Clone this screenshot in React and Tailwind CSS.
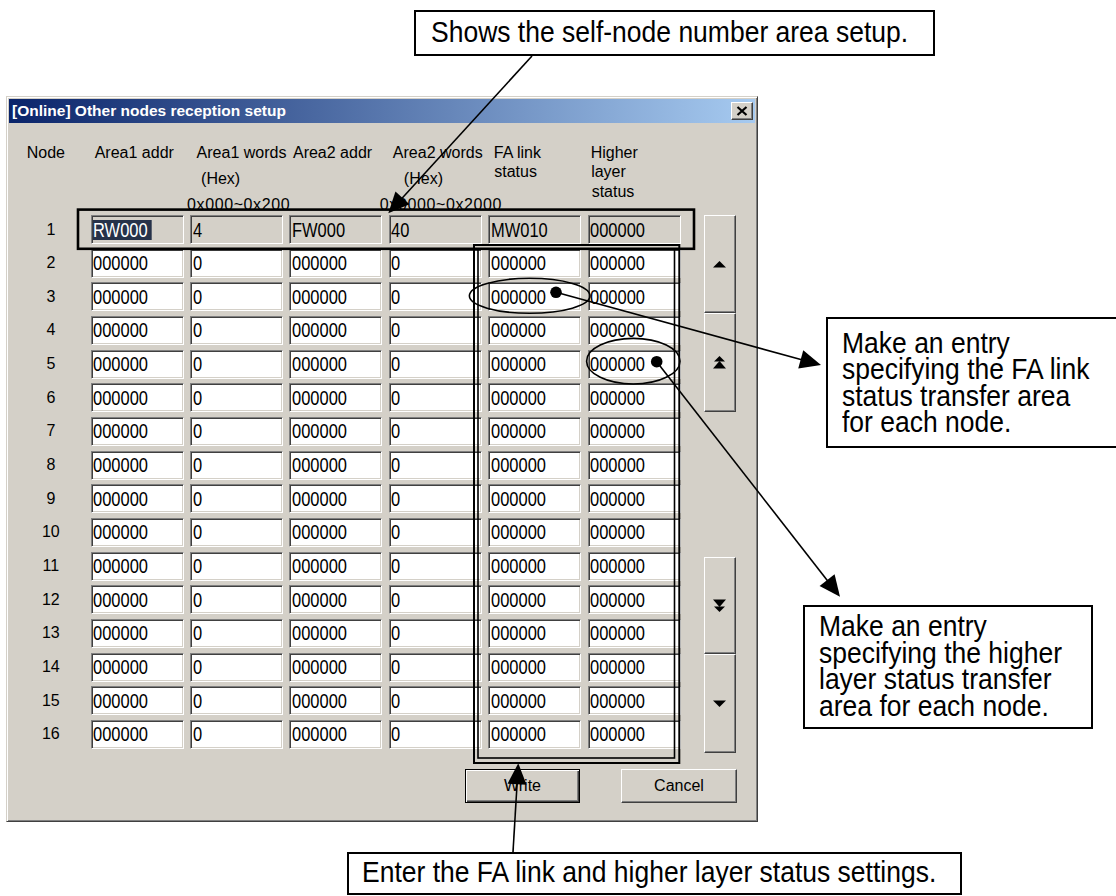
// Other nodes reception setup dialog, with its callout annotations
const firstRow = ["RW000", "4", "FW000", "40", "MW010", "000000"];
const otherRow = ["000000", "0", "000000", "0", "000000", "000000"];
const rows = Array.from({ length: 16 }, (_, i) => i + 1);

const heads = [
	{ lines: ["Area1 addr"], ml: [4] },
	{ lines: ["Area1 words", "(Hex)", "0x000~0x200"], ml: [6.5, 11, -3], tall: true },
	{ lines: ["Area2 addr"], ml: [3.5] },
	{ lines: ["Area2 words", "(Hex)", "0x0000~0x2000"], ml: [4, 15, -9], tall: true },
	{ lines: ["FA link", "status"], ml: [5.5, 6] },
	{ lines: ["Higher", "layer", "status"], ml: [3, 3.5, 4] },
];

function Field({ value, gray, selected }) {
	return (
		<div
			className={`h-[29px] w-[93px] flex items-center overflow-hidden border border-t-[#808080] border-l-[#808080] border-b-white border-r-white shadow-[inset_1px_1px_0_#404040,inset_-1px_-1px_0_#d4d0c8] pl-[1.6px] ${
				gray ? "bg-[#d4d0c8]" : "bg-white"
			}`}
		>
			<span
				className={`inline-block origin-left [transform:scaleX(0.804)] text-[20.5px] leading-[20px] whitespace-nowrap ${
					selected ? "bg-[#26324a] text-white pr-[5px]" : "text-black"
				}`}
			>
				{value}
			</span>
		</div>
	);
}

function ScrollButton({ h, children }) {
	return (
		<div
			className={`${h} w-[32px] flex items-center justify-center bg-[#d4d0c8] border border-t-white border-l-white border-r-[#404040] border-b-[#404040] shadow-[inset_-1px_-1px_0_#808080]`}
		>
			{children}
		</div>
	);
}

function Dialog() {
	return (
		<div className="w-[752px] h-[726px] bg-[#d4d0c8] border border-t-[#d4d0c8] border-l-[#d4d0c8] border-r-[#404040] border-b-[#404040] shadow-[inset_1px_1px_0_#fff,inset_-1px_-1px_0_#808080] p-[2px] flex flex-col">
			{/* Title bar */}
			<div className="h-[24px] flex items-center justify-between pl-[3px] pr-[2px] bg-[linear-gradient(to_right,#0a246a,#a6caf0)]">
				<span className="text-white font-bold text-[15.5px] leading-none whitespace-nowrap">
					[Online] Other nodes reception setup
				</span>
				<div className="w-[22px] h-[18px] flex items-center justify-center bg-[#d4d0c8] border border-t-white border-l-white border-r-[#404040] border-b-[#404040] shadow-[inset_-1px_-1px_0_#808080]">
					<svg width="12" height="10" viewBox="0 0 12 10">
						<path d="M1.5 1 L10.5 9 M10.5 1 L1.5 9" stroke="black" strokeWidth="2.2" />
					</svg>
				</div>
			</div>

			{/* Column headers */}
			<div className="h-[92px] flex text-[16px] text-black">
				<div className="w-[81.7px] text-center pr-[8px] pt-[19.7px] leading-[19.5px]">Node</div>
				<div className="flex gap-[6.4px]">
					{heads.map((h) => (
						<div
							key={h.lines[0]}
							className={`w-[93px] flex flex-col ${h.tall ? "pt-[16.7px] leading-[26px]" : "pt-[19.7px] leading-[19.5px]"}`}
						>
							{h.lines.map((l, i) => (
								<div
									key={l}
									className={`whitespace-nowrap ${l.startsWith("0x") ? "tracking-[0.6px]" : ""}`}
									style={{ marginLeft: h.ml[i] }}
								>
									{l}
								</div>
							))}
						</div>
					))}
				</div>
			</div>

			{/* Rows and scroll buttons */}
			<div className="flex items-start">
				<div className="flex flex-col gap-[4.67px]">
					{rows.map((n) => (
						<div key={n} className="flex items-center">
							<div className="w-[81.7px] text-center pl-[2px] text-[16px] text-black">{n}</div>
							<div className="flex gap-[6.4px]">
								{(n === 1 ? firstRow : otherRow).map((v, i) => (
									<Field key={i} value={v} gray={n === 1} selected={n === 1 && i === 0} />
								))}
							</div>
						</div>
					))}
				</div>
				<div className="ml-[23.3px] flex flex-col">
					<ScrollButton h="h-[98px]">
						<svg width="13" height="7" viewBox="0 0 13 7">
							<polygon points="6.5,0 13,6.5 0,6.5" fill="black" />
						</svg>
					</ScrollButton>
					<ScrollButton h="h-[99px]">
						<svg width="13" height="13" viewBox="0 0 13 13">
							<polygon points="6.5,0 12,5.5 1,5.5" fill="black" />
							<polygon points="6.5,5 13,12.5 0,12.5" fill="black" />
						</svg>
					</ScrollButton>
					<div className="h-[145px]" />
					<ScrollButton h="h-[97px]">
						<svg width="13" height="13" viewBox="0 0 13 13">
							<polygon points="0,0.5 13,0.5 6.5,8" fill="black" />
							<polygon points="1,7.5 12,7.5 6.5,13" fill="black" />
						</svg>
					</ScrollButton>
					<ScrollButton h="h-[99px]">
						<svg width="13" height="7" viewBox="0 0 13 7">
							<polygon points="0,0.5 13,0.5 6.5,7" fill="black" />
						</svg>
					</ScrollButton>
				</div>
			</div>

			{/* Write / Cancel */}
			<div className="flex mt-[16px] text-[16px] text-black">
				<button className="ml-[456px] w-[115px] h-[34px] bg-[#d4d0c8] border border-black shadow-[inset_1px_1px_0_#fff,inset_-1px_-1px_0_#404040,inset_-2px_-2px_0_#808080]">
					Write
				</button>
				<button className="ml-[41px] w-[116px] h-[34px] bg-[#d4d0c8] border border-t-white border-l-white border-r-[#404040] border-b-[#404040] shadow-[inset_-1px_-1px_0_#808080]">
					Cancel
				</button>
			</div>
		</div>
	);
}

function Note({ className, lines }) {
	return (
		<div className={`absolute bg-white border-2 border-black ${className}`}>
			<div className="origin-top-left [transform:scaleX(0.883)] text-[30px] leading-[26.6px] whitespace-nowrap text-black">
				{lines.map((l) => (
					<div key={l}>{l}</div>
				))}
			</div>
		</div>
	);
}

function Arrow({ x1, y1, x2, y2 }) {
	const len = 21;
	const hw = 9.5;
	const dx = x2 - x1;
	const dy = y2 - y1;
	const d = Math.hypot(dx, dy);
	const ux = dx / d;
	const uy = dy / d;
	const bx = x2 - ux * len;
	const by = y2 - uy * len;
	return (
		<g>
			<line x1={x1} y1={y1} x2={bx + ux * 2} y2={by + uy * 2} stroke="black" strokeWidth="1.6" />
			<polygon
				points={`${x2},${y2} ${bx - uy * hw},${by + ux * hw} ${bx + uy * hw},${by - ux * hw}`}
				fill="black"
			/>
		</g>
	);
}

function Marks() {
	return (
		<svg className="absolute inset-0 pointer-events-none" width="1116" height="896" viewBox="0 0 1116 896">
			<g fill="none" stroke="black">
				<rect x="78" y="209.6" width="616" height="39.2" strokeWidth="2.6" />
				<rect x="474" y="245" width="205.3" height="518" strokeWidth="2" />
				<rect x="478" y="249" width="196.5" height="509" strokeWidth="1.6" />
				<ellipse cx="529.7" cy="295.8" rx="60.3" ry="17.5" strokeWidth="1.6" />
				<ellipse cx="633.3" cy="361.2" rx="46.7" ry="22.8" strokeWidth="1.6" />
			</g>
			<circle cx="556" cy="292.3" r="5.8" fill="black" />
			<circle cx="656.7" cy="361.7" r="5.8" fill="black" />
			<Arrow x1={532} y1={56} x2={388.3} y2={213.3} />
			<Arrow x1={556} y1={292.3} x2={821} y2={365} />
			<Arrow x1={656.7} y1={361.7} x2={840} y2={596.7} />
			<Arrow x1={513} y1={852} x2={518.3} y2={763.3} />
		</svg>
	);
}

export default function App() {
	return (
		<div className="relative w-[1116px] h-[896px] overflow-hidden bg-white pt-[96px] pl-[6px] font-['Liberation_Sans',Arial,sans-serif]">
			<Dialog />
			<Note
				className="left-[414px] top-[9.6px] w-[521px] h-[46.2px] pl-[15px] pt-[7.7px]"
				lines={["Shows the self-node number area setup."]}
			/>
			<Note
				className="left-[826px] top-[317.3px] w-[320px] h-[131px] pl-[14px] pt-[10.3px]"
				lines={["Make an entry", "specifying the FA link", "status transfer area", "for each node."]}
			/>
			<Note
				className="left-[803px] top-[605px] w-[290.3px] h-[124.3px] pl-[14px] pt-[6px]"
				lines={["Make an entry", "specifying the higher", "layer status transfer", "area for each node."]}
			/>
			<Note
				className="left-[347px] top-[852px] w-[615px] h-[43px] pl-[13px] pt-[5px]"
				lines={["Enter the FA link and higher layer status settings."]}
			/>
			<Marks />
		</div>
	);
}
